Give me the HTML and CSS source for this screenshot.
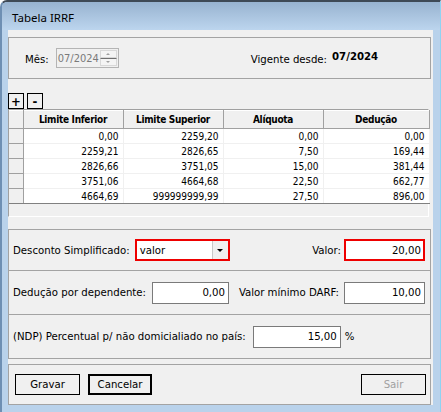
FILE: index.html
```html
<!DOCTYPE html>
<html lang="pt-BR">
<head>
<meta charset="utf-8">
<title>Tabela IRRF</title>
<link rel="stylesheet" href="styles.css">
</head>
<body>
<div class="window">
  <div class="titlebar"><span class="title">Tabela IRRF</span></div>
  <div class="client">
    <div class="panel head">
      <span class="lbl mes">Mês:</span>
      <div class="spin">
        <span class="spin-text">07/2024</span>
        <div class="spin-btns"><span class="sb"><i class="up"></i></span><span class="sb"><i class="down"></i></span></div>
      </div>
      <span class="lbl vig">Vigente desde:</span><span class="vig-val">07/2024</span>
    </div>

    <div class="tools"><span class="tbtn">+</span><span class="tbtn">-</span></div>

    <div class="grid">
      <table class="tbl">
        <colgroup><col class="c0"><col class="c1"><col class="c2"><col class="c3"><col class="c4"></colgroup>
        <thead>
          <tr><th class="ind"></th><th>Limite Inferior</th><th>Limite Superior</th><th>Alíquota</th><th>Dedução</th></tr>
        </thead>
        <tbody>
          <tr><td class="ind"></td><td>0,00</td><td>2259,20</td><td>0,00</td><td>0,00</td></tr>
          <tr><td class="ind"></td><td>2259,21</td><td>2826,65</td><td>7,50</td><td>169,44</td></tr>
          <tr><td class="ind"></td><td>2826,66</td><td>3751,05</td><td>15,00</td><td>381,44</td></tr>
          <tr><td class="ind"></td><td>3751,06</td><td>4664,68</td><td>22,50</td><td>662,77</td></tr>
          <tr class="last"><td class="ind"></td><td>4664,69</td><td>999999999,99</td><td>27,50</td><td>896,00</td></tr>
        </tbody>
      </table>
      <div class="grid-empty"></div>
    </div>

    <div class="panel p2">
      <span class="lbl">Desconto Simplificado:</span>
      <div class="combo red"><span class="combo-text">valor</span><span class="combo-btn"><i class="down dark"></i></span></div>
      <span class="lbl valor-lbl">Valor:</span>
      <div class="edit red wv">20,00</div>
    </div>

    <div class="panel p3">
      <span class="lbl">Dedução por dependente:</span>
      <div class="edit wd">0,00</div>
      <span class="lbl darf-lbl">Valor mínimo DARF:</span>
      <div class="edit wv">10,00</div>
    </div>

    <div class="panel p4">
      <span class="lbl">(NDP) Percentual p/ não domicialiado no país:</span>
      <div class="edit wn">15,00</div>
      <span class="lbl pct">%</span>
    </div>

    <div class="panel btns">
      <span class="btn">Gravar</span>
      <span class="btn default">Cancelar</span>
      <span class="btn disabled sair">Sair</span>
    </div>
  </div>
</div>
</body>
</html>
```

FILE: styles.css
```css
* { box-sizing: border-box; }
html, body { margin: 0; padding: 0; background: #ffffff; }
body {
  font-family: "DejaVu Sans Condensed", "DejaVu Sans", sans-serif;
  font-stretch: condensed;
  font-size: 11.3px;
  color: #000;
}

.window {
  width: 441px;
  height: 412px;
  background: #b9d2eb;
  border-top: 2px solid #3f4a56;
  border-left: 2px solid #6e8fb3;
  border-top-left-radius: 7px;
  display: flex;
  flex-direction: column;
  padding: 0 7px 7px 6px;
  border-right: 1px solid #8fd3f2;
}

.titlebar {
  height: 30px;
  margin: 0 -7px 0 -6px;
  padding-left: 10px;
  background: linear-gradient(#98b3d0, #bcd5ee);
  border-top-left-radius: 5px;
  display: flex;
  align-items: center;
}
.title {
  font-family: "Noto Sans", "Open Sans", sans-serif;
  font-stretch: normal;
  font-size: 11.5px;
  color: #000;
  padding-top: 2px;
}

.client {
  flex: 1;
  background: #f0f0f0;
  padding: 7px 2px 0 0;
  display: flex;
  flex-direction: column;
}

.panel {
  border: 1px solid #a3a3a3;
  display: flex;
  align-items: center;
}

/* header */
.head { height: 42px; padding-left: 16px; }
.mes { margin-right: 7px; }
.spin {
  width: 63px; height: 20px;
  border: 1px solid #b4b4b4;
  background: #f0f0f0;
  display: flex;
  align-items: center;
}
.spin-text { color: #7a7a7a; padding-left: 1px; flex: 1; font-size: 11px; }
.spin-btns {
  width: 17px; height: 16px;
  margin-right: 1px;
  display: flex; flex-direction: column;
}
.sb {
  flex: 1;
  border: 1px solid #d8d8d8;
  background: #f4f4f4;
  display: flex; align-items: center; justify-content: center;
}
.sb + .sb { border-top: 1px solid #707070; }
.up, .down { display: block; width: 0; height: 0; border-left: 2px solid transparent; border-right: 2px solid transparent; }
.up { border-bottom: 2px solid #a0a0a0; }
.down { border-top: 2px solid #a0a0a0; }
.vig { margin-left: 132px; }
.vig-val { font-weight: bold; margin-left: 5px; margin-top: -3px; }
.mes, .vig { margin-top: 2px; }

/* tool buttons */
.tools { display: flex; gap: 3px; margin-top: 14px; height: 16px; }
.tbtn {
  width: 16px; height: 16px;
  border: 1px solid #000;
  background: #f0f0f0;
  display: flex; align-items: center; justify-content: center;
  font-weight: bold; font-size: 13px; line-height: 1;
}

/* grid */
.grid {
  width: 421px;
  height: 108px;
  border-top: 1px solid #a0a0a0;
  border-left: 1px solid #a0a0a0;
  border-bottom: 1px solid #ffffff;
  border-right: 1px solid #ffffff;
  background: #f0f0f0;
  display: flex; flex-direction: column;
  font-size: 10px;
}
.tbl { border-collapse: collapse; table-layout: fixed; width: 420px; }
.c0 { width: 14px; }
.c1, .c2, .c3 { width: 100px; }
.c4 { width: 106px; }
.tbl th {
  height: 18px;
  padding: 0;
  font-weight: bold;
  letter-spacing: -0.3px;
  text-align: center;
  background: #f0f0f0;
  border-right: 1px solid #a0a0a0;
  border-bottom: 1px solid #a0a0a0;
  border-top: 1px solid #ffffff;
}
.tbl td {
  height: 15px;
  padding: 0 4px 0 0;
  text-align: right;
  background: #fff;
  border-right: 1px solid #f0f0f0;
  border-bottom: 1px solid #f0f0f0;
  line-height: 13px;
}
.tbl .ind { background: #f0f0f0; border-right: 1px solid #a0a0a0; border-bottom: 1px solid #a0a0a0; }
.tbl tr.last td { border-bottom: 1px solid #808080; }
.grid-empty { flex: 1; }

/* panels with fields */
.p2 { height: 42px; margin-top: 12px; padding-left: 4px; }
.p3 { height: 44px; padding-left: 4px; border-top: 0; }
.p4 { height: 44px; padding-left: 4px; border-top: 0; }

.edit {
  height: 22px;
  border: 1px solid #7a7a7a;
  background: #fff;
  text-align: right;
  padding-right: 3px;
  display: flex; align-items: center; justify-content: flex-end;
}
.red { border: 2px solid #ee0000; }
.combo {
  width: 95px; height: 22px;
  margin-left: 5px;
  background: #fff;
  display: flex; align-items: center;
}
.combo-text { flex: 1; padding-left: 3px; }
.combo-btn {
  width: 16px; height: 18px;
  background: #f0f0f0;
  border-left: 1px solid #c8c8c8;
  display: flex; align-items: center; justify-content: center;
}
.down.dark { border-top: 3px solid #000; border-left: 3px solid transparent; border-right: 3px solid transparent; }
.valor-lbl { margin-left: auto; margin-right: 3px; }
.wv { width: 81px; margin-right: 5px; }
.p2 .wv { padding-right: 2px; }
.wd { width: 77px; margin-left: 6px; }
.darf-lbl { margin-left: auto; margin-right: 5px; }
.wn { width: 88px; margin-left: 7px; }
.pct { margin-left: 4px; }

/* buttons */
.btns { height: 41px; margin-top: 5px; padding: 0 4px 0 6px; }
.btn {
  width: 65px; height: 21px;
  border: 1px solid #000;
  display: flex; align-items: center; justify-content: center;
  margin-right: 8px;
}
.btn.default { border: 2px solid #000; width: 64px; }
.btn.disabled { color: #a0a0a0; }
.sair { margin-left: auto; margin-right: 0; }
```
